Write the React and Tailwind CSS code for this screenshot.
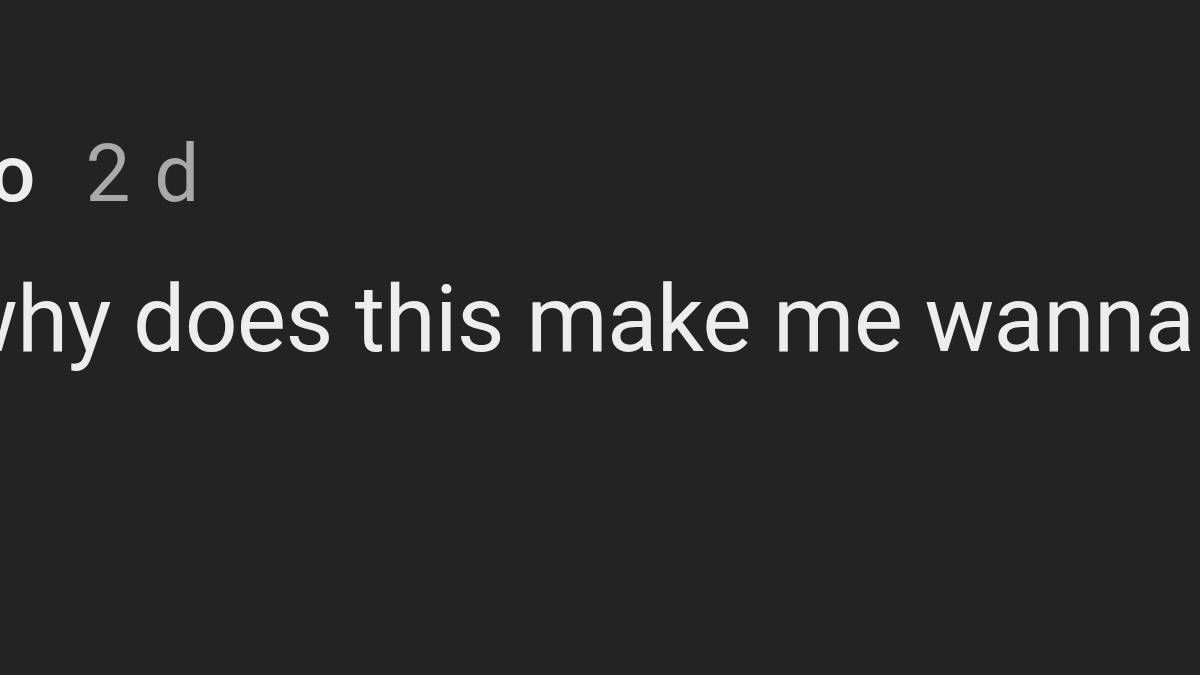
export default function App() {
  return (
    <div className="w-[1200px] h-[675px] bg-[#232323] overflow-hidden" style={{ fontFamily: "Roboto, sans-serif" }}>
      <div className="flex flex-col pt-[134px]">
        <div className="flex items-baseline text-[80px] leading-[80px] whitespace-nowrap ml-[-10px]">
          <span className="text-[#ededed] font-medium">o</span>
          <span className="text-[#a9a9a9] ml-[50px] tracking-[2px]">2 d</span>
        </div>
        <div className="text-[93px] leading-[110px] tracking-[-0.8px] text-[#ededed] whitespace-nowrap mt-[51px] ml-[-52px]">
          why does this make me wanna
        </div>
      </div>
    </div>
  );
}
